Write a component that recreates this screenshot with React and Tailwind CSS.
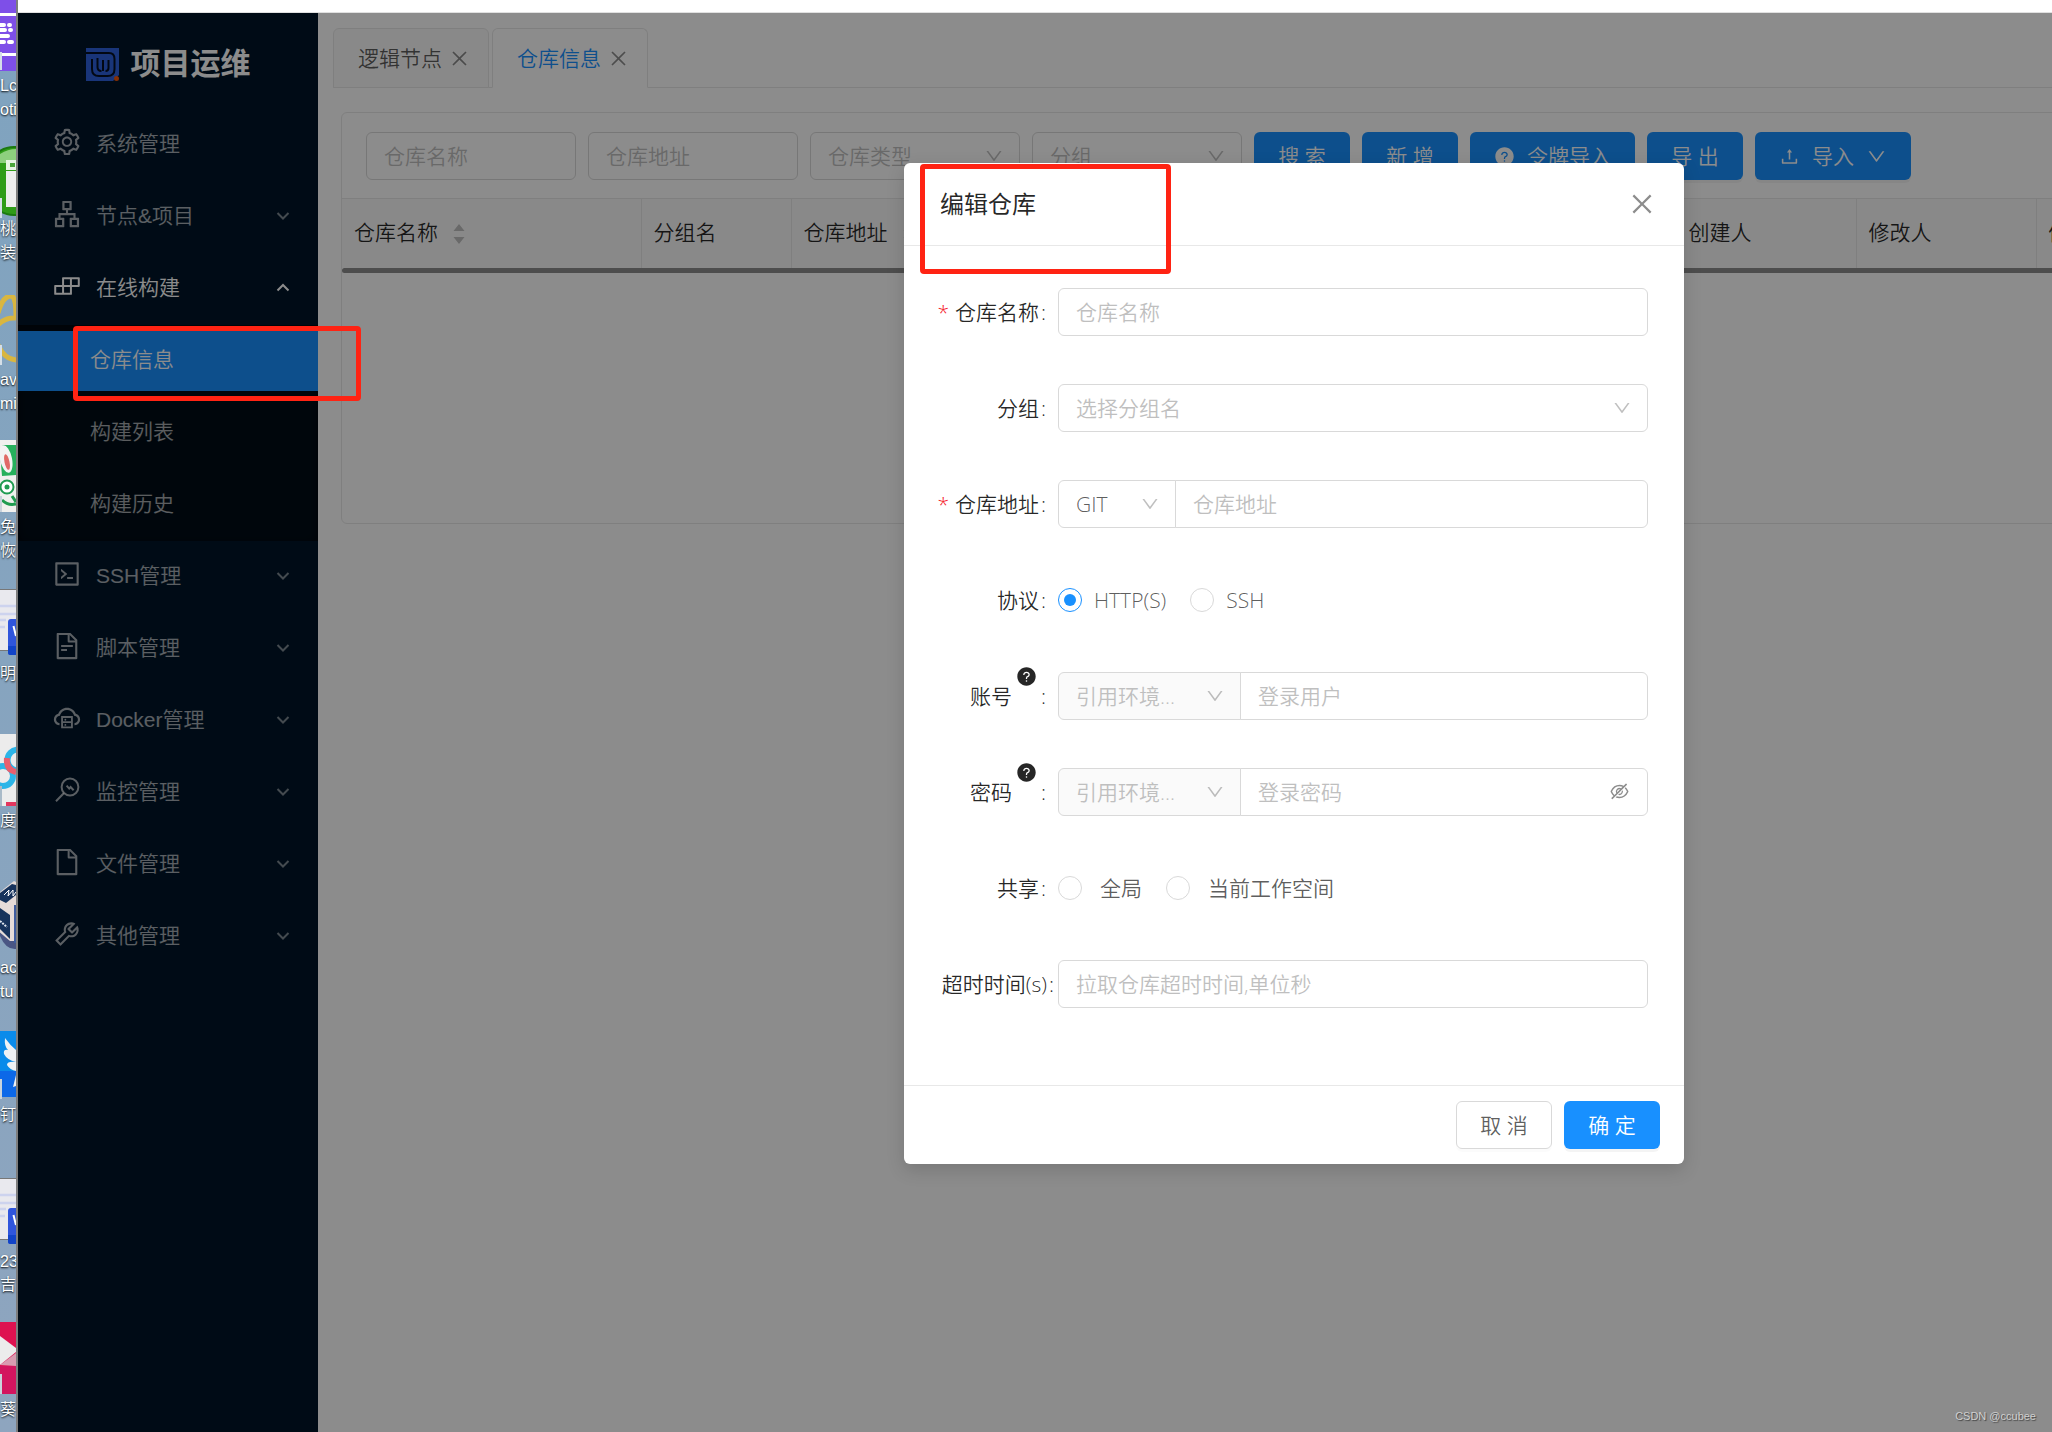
import { useState } from 'react';
import {
  AiOutlineSetting, AiOutlineApartment, AiOutlineBuild, AiOutlineCode,
  AiOutlineFileText, AiOutlineCloudServer, AiOutlineFile, AiOutlineTool,
  AiOutlineUpload, AiOutlineDown, AiOutlineClose, AiFillQuestionCircle,
  AiOutlineEyeInvisible
} from 'react-icons/ai';

const uiFont = "font-['Open_Sans','Noto_Sans_CJK_SC',sans-serif]";
const menuFont = "font-['Liberation_Sans','Noto_Sans_CJK_SC',sans-serif]";

const MonitorIcon = ({ className }) => (
  <svg viewBox="0 0 30 30" className={className} fill="none" stroke="currentColor" strokeWidth="2">
    <circle cx="18" cy="12" r="8.4" />
    <path d="M12 18 4 26.2M14.6 10.6l2.6 3 1.4-1.6 3 3.2" />
  </svg>
);

const Chevron = ({ up }) => (
  <svg viewBox="0 0 14 14" className={`w-3.5 h-3.5 ${up ? '' : 'opacity-75'}`} fill="none" stroke="currentColor" strokeWidth="2">
    <path d={up ? 'M1.500 9.500 7 4l5.500 5.500' : 'M1.500 4 7 9.500l5.500-5.500'} />
  </svg>
);

const Sorter = () => (
  <svg viewBox="0 0 12 20" className="w-3 h-5 mt-1" fill="#bfbfbf">
    <path d="M6 0l5.500 7H.5zM6 20l5.500-7H.5z" />
  </svg>
);

const menuItems = [
  { label: '系统管理', icon: AiOutlineSetting, leaf: true },
  { label: '节点&项目', icon: AiOutlineApartment },
  { label: '在线构建', icon: AiOutlineBuild, children: ['仓库信息', '构建列表', '构建历史'] },
  { label: 'SSH管理', icon: AiOutlineCode },
  { label: '脚本管理', icon: AiOutlineFileText },
  { label: 'Docker管理', icon: AiOutlineCloudServer },
  { label: '监控管理', icon: MonitorIcon },
  { label: '文件管理', icon: AiOutlineFile },
  { label: '其他管理', icon: AiOutlineTool }
];

// Slice of the desktop that shows beside the browser window
function Desktop() {
  const doc = (
    <>
      <rect width="16" height="62" fill="#e9e9ee" />
      <path d="M0 17h16M0 25h16M0 31h6M0 38h5" stroke="#cdd3ee" strokeWidth="2.5" />
      <path d="M0 .5h16M0 61.5h16" stroke="#777" />
      <rect x="8" y="30" width="14" height="36" rx="3" fill="#2f55dc" />
      <path d="M8 57h8v9h-6a2 2 0 0 1-2-2z" fill="#1244c8" />
      <path d="M13.500 37l2.500 10" stroke="#fff" strokeWidth="2" />
    </>
  );
  const icons = [
    { top: 'top-0', art: (
      <>
        <rect width="16" height="71" fill="#7e4fe8" />
        <path d="M0 14.500h16M0 54.500h16" stroke="#fff" strokeWidth="3" />
        <path d="M0 25h4M9 25h1M0 30h5M10 30h1M0 36h8M0 42h4M9 42h3" stroke="#fff" strokeWidth="4" strokeLinecap="round" />
        <rect y="52" width="2" height="18" fill="#d5dfe8" />
      </>
    ) },
    { top: 'top-[146px]', art: (
      <>
        <ellipse cx="14" cy="35" rx="30" ry="34" fill="#2f9c18" stroke="#1c7a10" strokeWidth="2" />
        <path d="M0 8Q8 3 16 3v14H0z" fill="#8ed07e" />
        <path d="M6 24V14h10v10z" fill="#e9f5e4" />
        <rect x="10" y="17" width="5" height="4" fill="#4da63b" />
        <rect x="6" y="25" width="14" height="36" fill="#ededed" />
        <rect y="52" width="2" height="20" fill="#d5dfe8" />
      </>
    ) },
    { top: 'top-[295px]', art: (
      <>
        <path d="M-2 18Q3 0 12 1q4 3 4 20M-4 32Q4 22 16 23M-2 50q6 14 18 15" fill="none" stroke="#d9b640" strokeWidth="5" />
        <rect y="50" width="2" height="20" fill="#d5dfe8" />
      </>
    ) },
    { top: 'top-[440px]', art: (
      <>
        <rect width="16" height="72" fill="#f0f0ee" />
        <path d="M3 5h13v30L2 36 0 12z" fill="#26b05c" />
        <ellipse cx="6" cy="19" rx="6" ry="14" fill="#f3f3f3" transform="rotate(-12 6 19)" />
        <ellipse cx="7" cy="22" rx="2.500" ry="8" fill="#e06a66" transform="rotate(-12 7 22)" />
        <circle cx="7" cy="47" r="6.500" fill="#fff" stroke="#1f9b50" strokeWidth="2" />
        <circle cx="7" cy="47" r="2.500" fill="#1f9b50" />
        <path d="M2 60q6 6 14 4M12 56l4 6" stroke="#1f9b50" strokeWidth="3" fill="none" />
        <rect y="56" width="2" height="16" fill="#c9d3dc" />
      </>
    ) },
    { top: 'top-[589px]', art: doc },
    { top: 'top-[734px]', art: (
      <>
        <rect width="16" height="72" fill="#ececec" />
        <circle cx="18" cy="26" r="10.500" fill="none" stroke="#2cb5e8" strokeWidth="6" />
        <circle cx="3" cy="42" r="10" fill="none" stroke="#2cb5e8" strokeWidth="6" />
        <path d="M7 24q-1 12 9 14" fill="none" stroke="#e85f6e" strokeWidth="6" />
        <rect x="6" y="68" width="10" height="4" fill="#e3365e" />
        <rect y="52" width="2" height="20" fill="#a9bac8" />
      </>
    ) },
    { top: 'top-[881px]', art: (
      <>
        <path d="M0 55q6 14 16 13v-8L0 50z" fill="#4a5684" />
        <path d="M-4 14 14 0l4 2v58H10L-4 48z" fill="#e6dcd9" />
        <path d="M0 12 12 3l4 1v10L6 22 0 19z" fill="#17335c" />
        <path d="M4 14l5-5-1 6 5-6v6l3-4" stroke="#fff" fill="none" />
        <path d="M0 27l10 7v24L0 48z" fill="#17335c" />
        <path d="M0 40l7 6" stroke="#dfe5ee" strokeWidth="2" strokeDasharray="2 1" />
        <rect x="14" y="24" width="2" height="38" fill="#3f5da0" />
      </>
    ) },
    { top: 'top-[1031px]', art: (
      <>
        <rect width="16" height="66" fill="#0a8bea" />
        <rect y="40" width="16" height="26" fill="#0c68e8" />
        <path d="M5 7q-1 8 3 12-5-1-4 4 3 6 12 8-9-1-9 3 3 5 9 6v-21Q10 14 5 7zM16 44l-3 12 3-1" fill="#eef1f4" />
        <rect y="48" width="2" height="20" fill="#c9d3dc" />
      </>
    ) },
    { top: 'top-[1178px]', art: doc },
    { top: 'top-[1322px]', art: (
      <>
        <rect width="16" height="44" fill="#de1250" />
        <rect y="44" width="16" height="28" fill="#d3155f" />
        <path d="M0 14 16 26v4L0 43z" fill="#ececec" />
        <path d="M0 43 16 31v13z" fill="#d99bb0" />
        <rect y="52" width="2" height="20" fill="#c9d3dc" />
      </>
    ) }
  ];
  const names = [
    { top: 'top-[74px]', text: 'Lc' },
    { top: 'top-[98px]', text: 'oti' },
    { top: 'top-[217px]', text: '桃' },
    { top: 'top-[241px]', text: '装' },
    { top: 'top-[368px]', text: 'av' },
    { top: 'top-[392px]', text: 'mi' },
    { top: 'top-[515px]', text: '兔' },
    { top: 'top-[539px]', text: '恢' },
    { top: 'top-[662px]', text: '明.' },
    { top: 'top-[809px]', text: '度' },
    { top: 'top-[956px]', text: 'acl' },
    { top: 'top-[980px]', text: 'tu' },
    { top: 'top-[1103px]', text: '钉' },
    { top: 'top-[1250px]', text: '23' },
    { top: 'top-[1273px]', text: '吉' },
    { top: 'top-[1398px]', text: '葵' }
  ];
  return (
    <div className="relative w-4 shrink-0 overflow-hidden bg-linear-to-b from-[#7fa3bf] to-[#8ea5bf]">
      {icons.map((icon) => (
        <svg key={icon.top} viewBox="0 0 16 72" className={`absolute left-0 w-4 h-[72px] ${icon.top}`}>{icon.art}</svg>
      ))}
      {names.map((name) => (
        <span key={name.top} className={`absolute left-0 font-['Liberation_Sans','Noto_Sans_CJK_SC',sans-serif] text-base leading-6 whitespace-nowrap text-white [text-shadow:0_1px_2px_#000] ${name.top}`}>
          {name.text}
        </span>
      ))}
    </div>
  );
}

function Sidebar() {
  return (
    <aside className={`w-[300px] shrink-0 bg-[#001529] text-[21px] text-white/65 ${menuFont}`}>
      <div className="h-24 pt-1.5 flex items-center justify-center gap-3 text-white">
        <svg viewBox="0 0 33 33" className="w-[33px] h-[33px]">
          <path d="M0 0h33v27l-6 6H0z" fill="#2f62dc" />
          <path d="M0 5h23q5.500 0 5.500 6v10q0 7-7 7H13q-7 0-7-7V11" fill="none" stroke="#041024" strokeWidth="2" />
          <path d="M11.500 10v9q0 4 4 4M17 12v11M22.500 12v8q0 3-3 3" fill="none" stroke="#041024" strokeWidth="2" />
          <circle cx="30.500" cy="30.500" r="2.500" fill="#f2560a" />
        </svg>
        <span className="text-[30px] font-bold leading-9">项目运维</span>
      </div>
      <nav>
        {menuItems.map(({ label, icon: Icon, leaf, children }) => (
          <div key={label}>
            <button className={`w-full h-[72px] pl-[34px] pr-7 pb-0.5 flex items-center gap-3.5 ${children ? 'text-white' : ''}`}>
              <Icon className="w-[30px] h-[30px] mb-1" />
              <span className="flex-1 text-left font-[350]">{label}</span>
              {!leaf && <Chevron up={!!children} />}
            </button>
            {children && (
              <ul className="bg-[#000c17] shadow-[inset_0_3px_12px_rgba(0,0,0,0.45)]">
                {children.map((child, i) => (
                  <li key={child} className="py-1.5">
                    <a href="#" className={`h-[60px] pl-[72px] pb-0.5 flex items-center font-[350] ${i === 0 ? 'bg-[#1890ff] text-white' : ''}`}>
                      {child}
                    </a>
                  </li>
                ))}
              </ul>
            )}
          </div>
        ))}
      </nav>
    </aside>
  );
}

function Tab({ label, active }) {
  return (
    <div className={`h-[60px] -mb-px pl-6 pr-[18px] flex items-center gap-[7px] border border-[#e8e8e8] rounded-t-md ${active ? 'bg-white border-b-white text-[#1890ff]' : 'bg-[#fafafa]'}`}>
      <button>{label}</button>
      <button aria-label={`关闭${label}`} className="text-black/45"><AiOutlineClose className="w-[21px] h-[21px]" /></button>
    </div>
  );
}

const fieldShape = 'h-12 px-[17px] border border-[#d9d9d9] rounded-md font-[350] placeholder:text-[#bfbfbf] outline-none';
const fieldBox = `bg-white ${fieldShape}`;

function Select({ label, text, className, disabled, filled }) {
  return (
    <div className={`relative ${className}`}>
      <select
        aria-label={label}
        disabled={disabled}
        className={`w-full appearance-none disabled:opacity-100 rounded-r-[inherit] ${fieldShape} ${filled ? '' : 'text-[#bfbfbf]'} ${disabled ? 'bg-[#fafafa]' : 'bg-white'}`}
      >
        <option>{text}</option>
      </select>
      <AiOutlineDown className="absolute right-4 top-3.5 w-5 h-5 text-black/25 pointer-events-none" />
    </div>
  );
}

const primary = 'h-12 flex items-center justify-center rounded-md bg-[#1890ff] text-white font-[350] whitespace-nowrap shadow-[0_3px_0_rgba(0,0,0,0.045)]';

function RepositoryPage() {
  const th = 'px-3 pb-0.5 border-r border-[#e8e8e8] text-left font-[350] text-black/85';
  return (
    <main className="flex-1 min-w-0 overflow-hidden bg-white pl-[15px] pt-[15px]">
      <div className="flex gap-[3px] border-b border-[#e8e8e8]">
        <Tab label="逻辑节点" />
        <Tab label="仓库信息" active />
      </div>
      <div className="mt-6 ml-2 w-max border border-[#e8e8e8] rounded-md overflow-hidden">
        <div className="pt-[19px] pb-[18px] px-6 flex gap-3">
          <input aria-label="仓库名称" placeholder="仓库名称" className={`w-[210px] ${fieldBox}`} />
          <input aria-label="仓库地址" placeholder="仓库地址" className={`w-[210px] ${fieldBox}`} />
          <Select label="仓库类型" text="仓库类型" className="w-[210px] rounded-md" />
          <Select label="分组" text="分组" className="w-[210px] rounded-md" />
          <button className={`w-24 ${primary}`}>搜 索</button>
          <button className={`w-24 ${primary}`}>新 增</button>
          <button className={`w-[165px] gap-3 ${primary}`}><AiFillQuestionCircle className="w-[21px] h-[21px]" />令牌导入</button>
          <button className={`w-24 ${primary}`}>导 出</button>
          <button className={`w-[156px] gap-3 ${primary}`}>
            <AiOutlineUpload className="w-[21px] h-[21px]" />导入<AiOutlineDown className="w-[21px] h-[21px]" />
          </button>
        </div>
        <table className="table-fixed w-[2204px] border-t border-[#e8e8e8]">
          <thead>
            <tr className="h-[69px] bg-[#fafafa]">
              <th className={`w-[299px] ${th}`}><span className="flex items-center gap-[15px]">仓库名称<Sorter /></span></th>
              <th className={`w-[150px] ${th}`}>分组名</th>
              <th className={`w-[885px] ${th}`}><span className="flex items-center gap-[15px]">仓库地址<Sorter /></span></th>
              <th className={`w-[180px] ${th}`}>创建人</th>
              <th className={`w-[180px] ${th}`}>修改人</th>
              <th className={th}>修改时间</th>
            </tr>
          </thead>
        </table>
        <div className="h-[5px] rounded-l-sm bg-[#8c8c8c]" />
        <div className="h-[250px]" />
      </div>
    </main>
  );
}

function FormRow({ label, htmlFor, required, help, tight, children }) {
  return (
    <div className="h-12 flex items-center">
      <label htmlFor={htmlFor} className={`w-[118px] shrink-0 flex items-center justify-end whitespace-nowrap text-black/85 ${tight ? 'pr-1' : 'pr-3'}`}>
        {required && <span aria-hidden="true" className="mr-1.5 text-[#f5222d]">*</span>}
        {label}
        {help && <AiFillQuestionCircle className="ml-1 mb-10 w-[21px] h-[21px]" />}
        <span className={help ? 'ml-1' : 'ml-0.5'}>:</span>
      </label>
      {children}
    </div>
  );
}

function Radio({ name, label, checked, onChange, wide }) {
  return (
    <label className={`mr-3 pr-3 flex items-center text-black/65 ${wide ? 'gap-[18px]' : 'gap-3'}`}>
      <input
        type="radio"
        name={name}
        checked={checked}
        onChange={onChange}
        className="appearance-none w-6 h-6 grid place-items-center rounded-full border border-[#d9d9d9] checked:border-[#1890ff] checked:before:content-[''] checked:before:w-3 checked:before:h-3 checked:before:rounded-full checked:before:bg-[#1890ff]"
      />
      {label}
    </label>
  );
}

function EditDialog() {
  const [protocol, setProtocol] = useState('HTTP(S)');
  const [share, setShare] = useState('');
  const joined = `-ml-px flex-1 min-w-0 rounded-l-none ${fieldBox}`;

  return (
    <div role="dialog" aria-labelledby="dialog-title" className="w-[780px] rounded-md bg-white text-black/65 shadow-[0_6px_18px_rgba(0,0,0,0.15)]">
      <header className="h-[83px] px-9 flex items-center justify-between border-b border-[#e8e8e8]">
        <h2 id="dialog-title" className="text-2xl font-normal text-black/85">编辑仓库</h2>
        <button aria-label="关闭" className="-mr-2 text-black/45"><AiOutlineClose className="w-7 h-7" /></button>
      </header>
      <form className="px-9 pt-[42px] pb-[77px] flex flex-col gap-12">
        <FormRow label="仓库名称" htmlFor="repo-name" required>
          <input id="repo-name" placeholder="仓库名称" className={`flex-1 min-w-0 ${fieldBox}`} />
        </FormRow>
        <FormRow label="分组">
          <Select label="分组" text="选择分组名" className="flex-1 rounded-md" />
        </FormRow>
        <FormRow label="仓库地址" htmlFor="repo-url" required>
          <Select label="类型" text="GIT" filled className="w-[118px]" />
          <input id="repo-url" placeholder="仓库地址" className={joined} />
        </FormRow>
        <FormRow label="协议">
          {['HTTP(S)', 'SSH'].map((item) => (
            <Radio key={item} name="protocol" label={item} checked={protocol === item} onChange={() => setProtocol(item)} />
          ))}
        </FormRow>
        <FormRow label="账号" htmlFor="account" help>
          <Select label="引用环境变量" text="引用环境..." disabled className="w-[183px]" />
          <input id="account" placeholder="登录用户" className={joined} />
        </FormRow>
        <FormRow label="密码" htmlFor="password" help>
          <Select label="引用环境变量" text="引用环境..." disabled className="w-[183px]" />
          <div className="relative flex-1 flex">
            <input id="password" type="password" placeholder="登录密码" className={joined} />
            <button type="button" aria-label="显示密码" className="absolute right-[18px] top-[13px] text-black/45">
              <AiOutlineEyeInvisible className="w-[21px] h-[21px]" />
            </button>
          </div>
        </FormRow>
        <FormRow label="共享">
          {['全局', '当前工作空间'].map((item) => (
            <Radio key={item} name="share" label={item} wide checked={share === item} onChange={() => setShare(item)} />
          ))}
        </FormRow>
        <FormRow label="超时时间(s)" htmlFor="timeout" tight>
          <input id="timeout" placeholder="拉取仓库超时时间,单位秒" className={`flex-1 min-w-0 ${fieldBox}`} />
        </FormRow>
      </form>
      <footer className="px-6 py-[15px] flex justify-end gap-3 border-t border-[#e8e8e8]">
        <button className="w-24 h-12 border border-[#d9d9d9] rounded-md shadow-[0_3px_0_rgba(0,0,0,0.015)]">取 消</button>
        <button className={`w-24 ${primary}`}>确 定</button>
      </footer>
    </div>
  );
}

export default function App() {
  return (
    <div className={`relative min-h-screen flex overflow-hidden text-[21px] leading-8 font-[350] text-black/65 ${uiFont}`}>
      <Desktop />
      <div className="flex-1 min-w-0 flex flex-col border-l-2 border-[#7d7d7d]">
        <div className="h-[13px] bg-white border-b border-[#e0e0e0]" />
        <div className="relative flex-1 flex">
          <Sidebar />
          <RepositoryPage />
          <div className="absolute inset-0 pt-[150px] pl-[518px] flex items-start justify-center bg-black/45">
            <EditDialog />
          </div>
        </div>
      </div>

      {/* Callouts */}
      <div className="absolute left-[73px] top-[326px] w-[288px] h-[75px] border-5 border-[#ff2313] rounded-sm pointer-events-none" />
      <div className="absolute left-[920px] top-[164px] w-[251px] h-[110px] border-5 border-[#ff2313] rounded-sm pointer-events-none" />
      <span className="absolute right-4 bottom-2 text-[11px] leading-4 font-['Liberation_Sans',sans-serif] font-normal text-[#d0d0d0] [text-shadow:1px_1px_1px_#444]">CSDN @ccubee</span>
    </div>
  );
}
